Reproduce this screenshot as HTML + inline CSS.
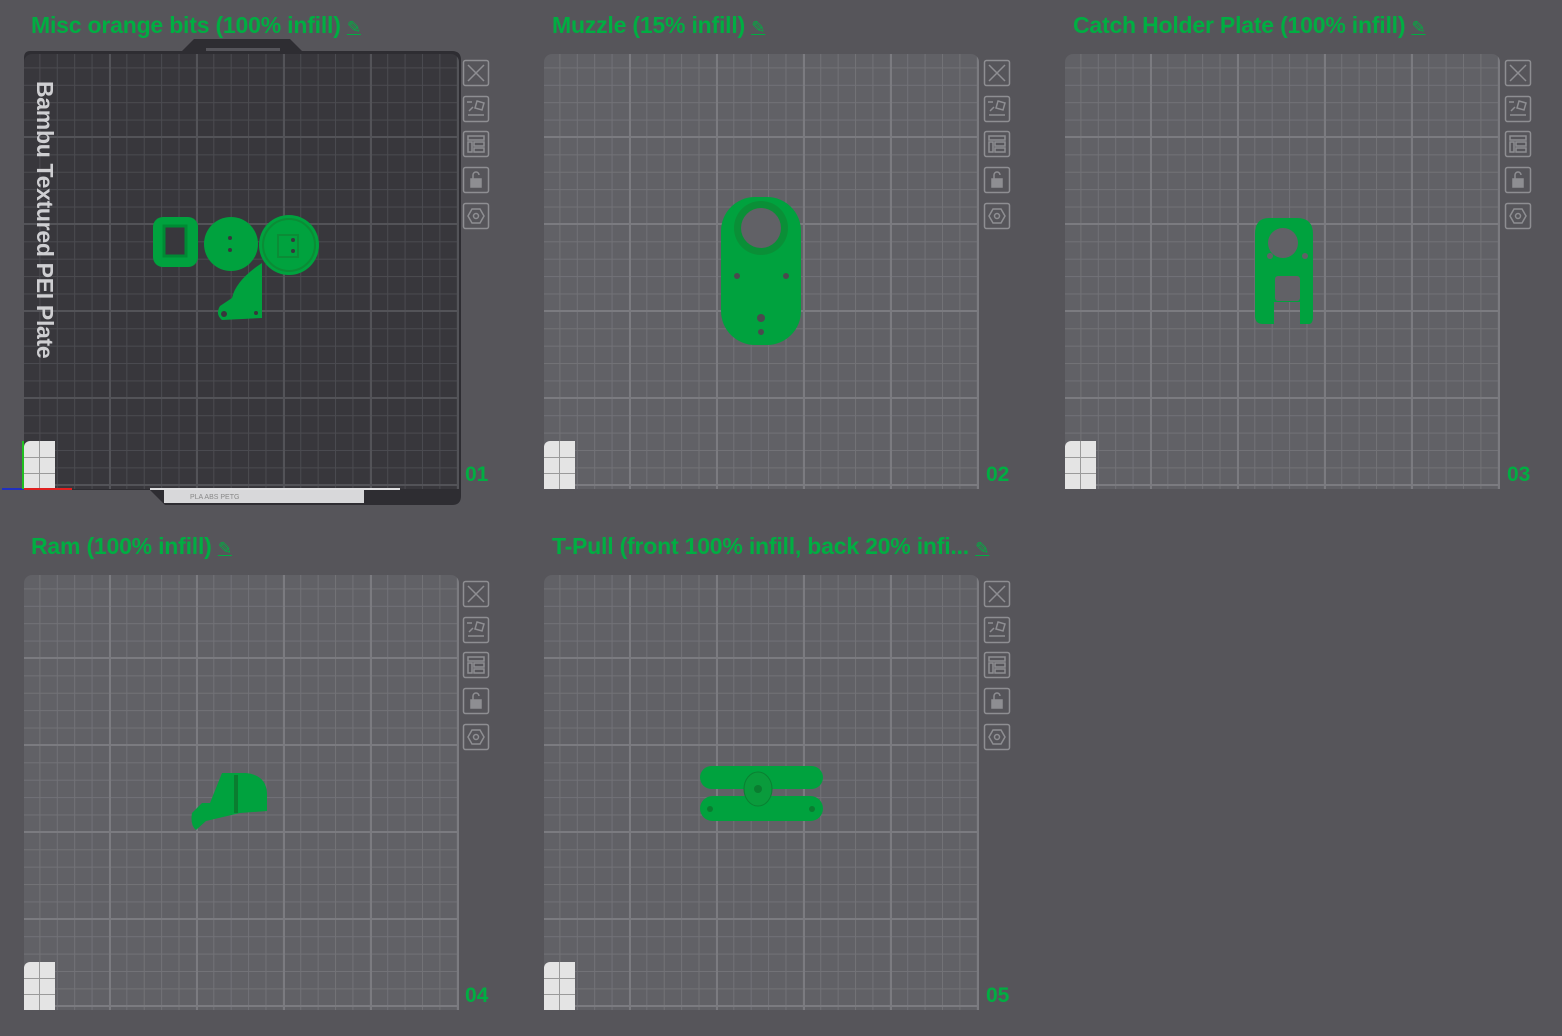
<!DOCTYPE html>
<html><head><meta charset="utf-8"><style>
body{margin:0;width:1562px;height:1036px;background:#56555a;position:relative;overflow:hidden;font-family:"Liberation Sans",sans-serif}
.t{position:absolute;color:#00ae42;font-size:23px;font-weight:bold;white-space:nowrap;letter-spacing:-0.2px}
.t span{font-weight:normal;font-size:17px;text-decoration:underline}
.p{position:absolute;width:435px;height:435px;border-radius:8px 8px 0 0;
background-color:#616166;
background-image:
linear-gradient(90deg,#7b7b80 2px,transparent 2px),
linear-gradient(0deg,#7b7b80 2px,transparent 2px),
linear-gradient(90deg,#727277 1px,transparent 1px),
linear-gradient(0deg,#727277 1px,transparent 1px);
background-size:87px 87px,87px 87px,17.4px 17.4px,17.4px 17.4px;background-position:-2px 0,0 -3px,-2px 0,0 -3px}
.p.d{background-color:#38373c;background-image:
linear-gradient(90deg,#535358 2px,transparent 2px),
linear-gradient(0deg,#535358 2px,transparent 2px),
linear-gradient(90deg,#4b4b50 1px,transparent 1px),
linear-gradient(0deg,#4b4b50 1px,transparent 1px)}
.c{position:absolute;left:0;bottom:0;width:31px;height:48px;background:#e4e4e4;border-radius:6px 0 0 0;
background-image:linear-gradient(90deg,transparent 15px,#9a9a9a 15px,#9a9a9a 16px,transparent 16px),linear-gradient(0deg,transparent 15px,#9a9a9a 15px,#9a9a9a 16px,transparent 16px,transparent 31px,#9a9a9a 31px,#9a9a9a 32px,transparent 32px)}
.n{position:absolute;color:#00ae42;font-weight:bold;font-size:21px}
</style></head><body>

<div class="t" style="left:31px;top:12px">Misc orange bits (100% infill) <span>✎</span></div>
<div class="t" style="left:552px;top:12px">Muzzle (15% infill) <span>✎</span></div>
<div class="t" style="left:1073px;top:12px">Catch Holder Plate (100% infill) <span>✎</span></div>
<div class="t" style="left:31px;top:533px">Ram (100% infill) <span>✎</span></div>
<div class="t" style="left:552px;top:533px">T-Pull (front 100% infill, back 20% infi... <span>✎</span></div>

<svg style="position:absolute;left:0;top:0" width="520" height="520">
<path d="M30 51 L182 51 L194 39 L290 39 L302 51 L452 51 Q461 51 461 60 L461 496 Q461 505 452 505 L165 505 L150 490 L24 490 L24 58 Q24 51 30 51Z" fill="#2e2d32"/>
</svg>
<div class="p d" style="left:24px;top:54px;width:435px;height:435px">
<div class="c"></div>
<div style="position:absolute;left:16px;top:27px;transform-origin:0 0;transform:translate(18px,0) rotate(90deg);color:#cfcfd2;font-weight:bold;font-size:23px;white-space:nowrap;letter-spacing:-0.3px">Bambu Textured PEI Plate</div>
</div>
<svg style="position:absolute;left:0;top:0" width="520" height="520">
<rect x="206" y="48" width="74" height="3" fill="#55545a"/>
<rect x="164" y="490" width="200" height="13" fill="#d8d8da"/>
<rect x="150" y="488" width="250" height="2" fill="#e0e0e2"/>
<text x="190" y="499" font-size="7" fill="#888">PLA ABS PETG</text>
<line x1="2" y1="489" x2="24" y2="489" stroke="#2030c0" stroke-width="2"/>
<line x1="24" y1="489" x2="72" y2="489" stroke="#e02020" stroke-width="2"/>
<line x1="23" y1="441" x2="23" y2="489" stroke="#20c020" stroke-width="2"/>
<g fill="#00a23e">
<rect x="153" y="217" width="45" height="50" rx="10"/>
<circle cx="231" cy="244" r="27"/>
<circle cx="289" cy="245" r="30"/>
<path d="M262 263 L262 318 L222 320 Q215 314 220 306 L232 298 Q236 280 262 263Z"/>
</g>
<rect x="164" y="226" width="22" height="30" fill="#38373c" stroke="#008a34" stroke-width="3"/>
<circle cx="289" cy="245" r="26" fill="none" stroke="#0b8c36" stroke-width="2"/>
<rect x="278" y="235" width="20" height="22" fill="none" stroke="#0b8c36" stroke-width="2"/>
<g fill="#38373c"><circle cx="230" cy="238" r="2"/><circle cx="230" cy="250" r="2"/><circle cx="293" cy="240" r="2"/><circle cx="293" cy="251" r="2"/><circle cx="224" cy="314" r="3"/><circle cx="256" cy="313" r="2"/></g>
</svg>

<div class="p" style="left:544px;top:54px"><div class="c"></div>
<svg style="position:absolute;left:0;top:0" width="435" height="435">
<rect x="177" y="143" width="80" height="148" rx="34" fill="#00a23e"/>
<circle cx="217" cy="174" r="27" fill="#0a8f37"/>
<circle cx="217" cy="174" r="20" fill="#616166"/>
<g fill="#4a4a4e"><circle cx="193" cy="222" r="3"/><circle cx="242" cy="222" r="3"/><circle cx="217" cy="264" r="4"/><circle cx="217" cy="278" r="3"/></g>
</svg></div>

<div class="p" style="left:1065px;top:54px"><div class="c"></div>
<svg style="position:absolute;left:0;top:0" width="435" height="435">
<path d="M204 164 Q190 164 190 180 L190 262 Q190 270 198 270 L209 270 L209 248 L235 248 L235 270 L244 270 Q248 270 248 262 L248 180 Q248 164 232 164Z" fill="#00a23e"/>
<circle cx="218" cy="189" r="15" fill="#616166"/>
<rect x="210" y="222" width="25" height="25" rx="3" fill="#616166"/>
<circle cx="205" cy="202" r="3" fill="#616166"/><circle cx="240" cy="202" r="3" fill="#616166"/>
</svg></div>

<div class="p" style="left:24px;top:575px"><div class="c"></div>
<svg style="position:absolute;left:0;top:0" width="435" height="435">
<path d="M198 198 L222 198 Q242 200 243 218 L243 236 L216 238 L182 246 L172 255 Q166 250 168 238 L178 228 L186 228 Z" fill="#00a23e"/>
<path d="M212 200 L212 238" stroke="#0a7d30" stroke-width="4"/>
</svg></div>

<div class="p" style="left:544px;top:575px"><div class="c"></div>
<svg style="position:absolute;left:0;top:0" width="435" height="435">
<rect x="156" y="191" width="123" height="23" rx="11.5" fill="#00a23e"/>
<rect x="156" y="221" width="123" height="25" rx="12.5" fill="#00a23e"/>
<ellipse cx="214" cy="214" rx="14" ry="17" fill="#0a9b3c" stroke="#0a8032"/>
<circle cx="214" cy="214" r="4" fill="#0a7d30"/>
<circle cx="166" cy="234" r="3" fill="#0a7d30"/><circle cx="268" cy="234" r="3" fill="#0a7d30"/>
</svg></div>

<svg style="position:absolute;left:0;top:0;pointer-events:none" width="1562" height="1036">
<defs>
<g id="icons" fill="none" stroke="#8e8e92" stroke-width="1.5">
<rect x="0.5" y="0.5" width="25" height="25" rx="2"/>
<path d="M5 5L21 21M21 5L5 21"/>
<rect x="0.5" y="36.5" width="25" height="25" rx="2"/>
<path d="M14 41l7 2-2 7-7-2zM5 55h16M6 51l4-4M4 42h5"/>
<rect x="0.5" y="71.5" width="25" height="25" rx="2"/>
<rect x="5" y="76" width="16" height="4"/><rect x="5" y="82" width="4" height="10"/><rect x="11" y="82" width="10" height="4"/><rect x="11" y="88" width="10" height="4"/>
<rect x="0.5" y="107.5" width="25" height="25" rx="2"/>
<rect x="8" y="119" width="10" height="8" fill="#8e8e92"/><path d="M10 119v-4a3 3 0 0 1 6 0"/>
<rect x="0.5" y="143.5" width="25" height="25" rx="2"/>
<path d="M9 149h8l4 7-4 7H9l-4-7z"/><circle cx="13" cy="156" r="2.5"/>
</g></defs>
<use href="#icons" x="463" y="60"/><use href="#icons" x="984" y="60"/><use href="#icons" x="1505" y="60"/>
<use href="#icons" x="463" y="581"/><use href="#icons" x="984" y="581"/>
</svg>

<div class="n" style="left:465px;top:463px">01</div>
<div class="n" style="left:986px;top:463px">02</div>
<div class="n" style="left:1507px;top:463px">03</div>
<div class="n" style="left:465px;top:984px">04</div>
<div class="n" style="left:986px;top:984px">05</div>
</body></html>
